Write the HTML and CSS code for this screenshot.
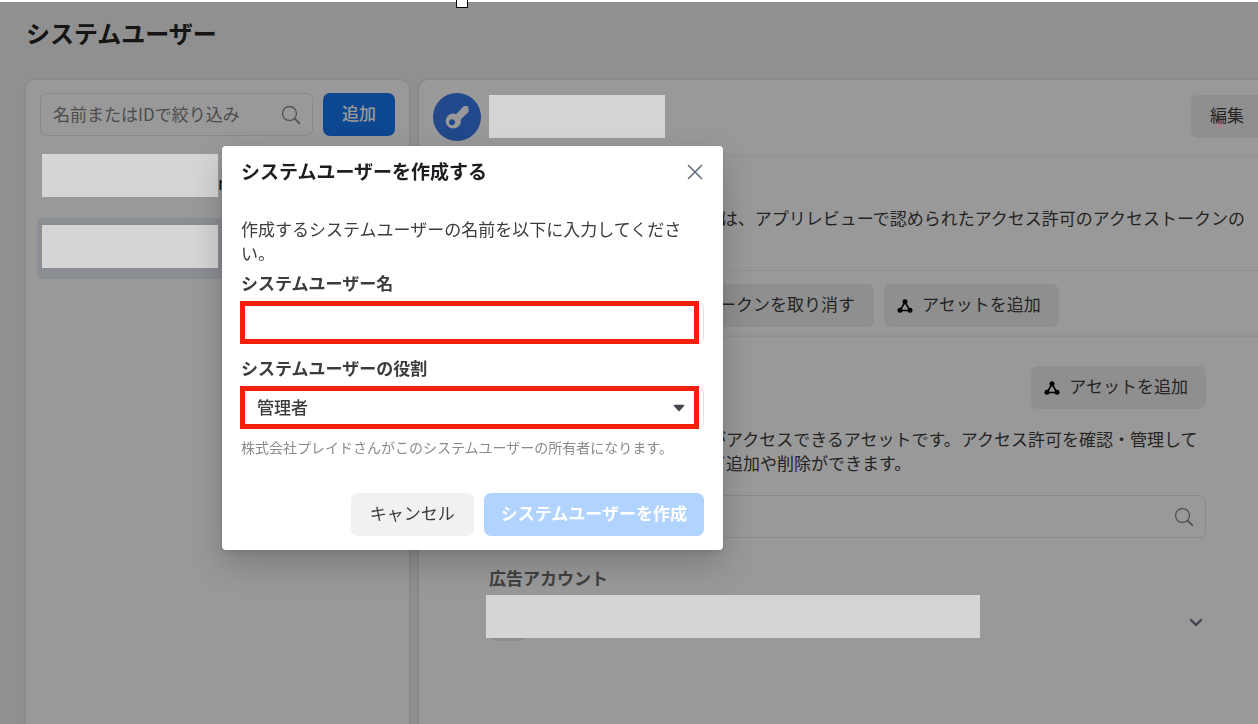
FILE: index.html
```html
<!DOCTYPE html>
<html lang="ja">
<head>
    <meta charset="UTF-8">
    <meta name="viewport" content="width=device-width, initial-scale=1.0">
    <title>システムユーザー</title>
    <link rel="stylesheet" href="styles.css">
</head>
<body>
    <svg class="sprite" aria-hidden="true">
        <symbol id="search" viewBox="0 0 20 20">
            <circle cx="8.5" cy="8.5" r="7" fill="none" stroke="currentColor" stroke-width="1.4"/>
            <path d="M13.8 13.8L18.4 18.4" stroke="currentColor" stroke-width="2" stroke-linecap="round"/>
        </symbol>
        <symbol id="assets" viewBox="0 0 16 16">
            <path d="M8 4L3 12.5H13Z" fill="none" stroke="currentColor" stroke-width="1.6"/>
            <circle cx="8" cy="3.8" r="2.5" fill="currentColor"/>
            <circle cx="3" cy="12.2" r="2.5" fill="currentColor"/>
            <circle cx="13" cy="12.2" r="2.5" fill="currentColor"/>
        </symbol>
    </svg>

    <!-- Page -->
    <div class="page">
        <h1>システムユーザー</h1>
        <div class="columns">
            <!-- User list -->
            <section class="panel users">
                <div class="user-tools">
                    <div class="search-box">
                        <input type="text" aria-label="名前またはIDで絞り込み" placeholder="名前またはIDで絞り込み">
                        <svg class="icon-search"><use href="#search"/></svg>
                    </div>
                    <button class="btn primary">追加</button>
                </div>
                <ul class="user-list">
                    <li><span class="mask"></span><span class="user-name">n</span></li>
                    <li class="selected"><span class="mask"></span></li>
                </ul>
            </section>

            <!-- User detail -->
            <div class="detail">
                <section class="panel summary">
                    <div class="summary-head">
                        <svg class="avatar" viewBox="0 0 48 48">
                            <circle cx="24" cy="24" r="24" fill="#387be8"/>
                            <path d="M21 26L31.5 14.8H33.8V18.2L23 28.5Z" fill="#fff" stroke="#fff" stroke-width="3.4" stroke-linejoin="round"/>
                            <circle cx="20.3" cy="28" r="7.6" fill="#fff"/>
                            <circle cx="19" cy="29.2" r="3" fill="#387be8"/>
                        </svg>
                        <span class="mask"></span>
                        <button class="btn edit">編集</button>
                    </div>
                    <p class="summary-text">のは、アプリレビューで認められたアクセス許可のアクセストークンの</p>
                    <div class="summary-actions">
                        <button class="btn">トークンを取り消す</button>
                        <button class="btn with-icon"><svg class="icon-assets"><use href="#assets"/></svg>アセットを追加</button>
                    </div>
                </section>

                <section class="panel assets">
                    <button class="btn with-icon"><svg class="icon-assets"><use href="#assets"/></svg>アセットを追加</button>
                    <p>がアクセスできるアセットです。アクセス許可を確認・管理して<br>て追加や削除ができます。</p>
                    <div class="search-box">
                        <input type="text" aria-label="アセットを検索">
                        <svg class="icon-search"><use href="#search"/></svg>
                    </div>
                    <h3>広告アカウント</h3>
                    <div class="asset-row">
                        <span class="thumb"></span>
                        <span class="mask"></span>
                        <svg class="chevron" viewBox="0 0 14 9"><path d="M2 2L7 7L12 2" fill="none" stroke="currentColor" stroke-width="2.4" stroke-linecap="round" stroke-linejoin="round"/></svg>
                    </div>
                </section>
            </div>
        </div>
    </div>

    <div class="backdrop"></div>
    <div class="top-edge"><span class="handle"></span></div>

    <!-- Create dialog -->
    <form class="modal" role="dialog" aria-labelledby="modalTitle">
        <div class="modal-head">
            <h2 id="modalTitle">システムユーザーを作成する</h2>
            <button type="button" class="close" aria-label="閉じる">
                <svg viewBox="0 0 16 16"><path d="M1.5 1.5L14.5 14.5M14.5 1.5L1.5 14.5" stroke="currentColor" stroke-width="1.7" stroke-linecap="round"/></svg>
            </button>
        </div>
        <p class="lead">作成するシステムユーザーの名前を以下に入力してください。</p>

        <label for="userName">システムユーザー名</label>
        <div class="field">
            <input type="text" id="userName">
            <span class="highlight"></span>
        </div>

        <label for="role">システムユーザーの役割</label>
        <div class="field">
            <select id="role">
                <option>管理者</option>
            </select>
            <svg class="caret" viewBox="0 0 12 8"><path d="M1.5 1.5H10.5L6 6.5Z" fill="currentColor" stroke="currentColor" stroke-width="1.6" stroke-linejoin="round"/></svg>
            <span class="highlight"></span>
        </div>
        <p class="hint">株式会社プレイドさんがこのシステムユーザーの所有者になります。</p>

        <div class="modal-actions">
            <button type="button" class="btn">キャンセル</button>
            <button type="submit" class="btn primary" disabled>システムユーザーを作成</button>
        </div>
    </form>
</body>
</html>
```

FILE: styles.css
```css
* {
    box-sizing: border-box;
}
body {
    margin: 0;
    height: 100vh;
    overflow: hidden;
    background: #f0f0f0;
    color: #3c3c3c;
    font-family: "Noto Sans CJK JP", sans-serif;
    font-size: 17px;
    line-height: 24px;
}
h1, h2, h3, p, ul {
    margin: 0;
    padding: 0;
}
input, select, button {
    font: inherit;
    color: inherit;
}
.sprite {
    display: none;
}

/* Shared controls */
.btn {
    height: 43px;
    padding: 0 19px 3px;
    border: none;
    border-radius: 7px;
    background: #f1f1f1;
    white-space: nowrap;
}
.page .btn {
    background: #efefef;
}
.btn.primary,
.page .btn.primary {
    background: #1877f2;
    color: #fff;
    font-weight: 500;
}
.btn.primary:disabled {
    background: #b0d4ff;
    font-weight: 700;
}
.btn.with-icon {
    display: flex;
    align-items: center;
    gap: 9px;
    padding: 0 18px 3px 13px;
}
.icon-assets {
    width: 16px;
    height: 16px;
    margin-top: 3px;
    color: #000;
}
.search-box {
    position: relative;
    flex: 1;
}
.search-box input {
    display: block;
    width: 100%;
    height: 43px;
    padding: 0 40px 3px 12px;
    border: 1px solid #e4e4e4;
    border-radius: 7px;
    background: #fff;
}
.search-box input::placeholder {
    color: #808080;
    opacity: 1;
}
.icon-search {
    position: absolute;
    top: 12px;
    right: 12px;
    width: 20px;
    height: 20px;
    color: #888e99;
}
.mask {
    position: relative;
    z-index: 2;
    width: 176px;
    height: 43px;
    background: #d5d5d5;
}

/* Page */
.page {
    display: flex;
    flex-direction: column;
    height: 100vh;
    padding: 15px 0 0 26px;
}
h1 {
    height: 65px;
    color: #242424;
    font-size: 24px;
    line-height: 36px;
}
.columns {
    display: grid;
    grid-template-columns: 383px 1fr;
    gap: 10px;
    flex: 1;
    margin-bottom: -16px;
}
.panel {
    background: #fff;
    border-radius: 9px;
    box-shadow: 0 0 3px rgba(0, 0, 0, 0.15);
}
.user-tools {
    display: flex;
    gap: 10px;
    padding: 13px 14px 0;
}
.user-list {
    display: flex;
    flex-direction: column;
    gap: 10px;
    padding: 11px;
    list-style: none;
}
.user-list li {
    display: flex;
    align-items: flex-start;
    height: 61px;
    padding: 7px 5px;
    border-radius: 6px;
}
.user-list li.selected {
    background: #e6ebf3;
}
.user-name {
    padding-top: 17px;
    color: #1c1c1c;
}

.detail {
    display: flex;
    flex-direction: column;
    margin-right: -22px;
}
.summary {
    border-radius: 9px 9px 0 0;
}
.summary-head {
    display: flex;
    align-items: center;
    height: 76px;
    padding: 0 17px 2px 14px;
    border-bottom: 1px solid #f0f0f0;
}
.avatar {
    width: 48px;
    height: 48px;
    margin-right: 8px;
}
.edit {
    margin-left: auto;
}
.summary-text {
    height: 115px;
    padding: 50px 35px 0 0;
    border-bottom: 1px solid #f0f0f0;
    text-align: right;
}
.summary-actions {
    display: flex;
    gap: 10px;
    padding: 13px 14px 10px 264px;
}
.assets {
    display: flex;
    flex: 1;
    flex-direction: column;
    padding: 29px 74px 0 48px;
    border-radius: 0;
}
.assets .btn {
    align-self: flex-end;
}
.assets p {
    margin: 18px 0 20px;
    padding-left: 242px;
    white-space: nowrap;
}
.assets .search-box {
    flex: none;
}
h3 {
    margin: 28px 22px 5px;
    color: #6c6c6c;
    font-size: 17px;
}
.asset-row {
    position: relative;
    display: flex;
    align-items: center;
    justify-content: space-between;
    padding: 0 3px 0 19px;
}
.asset-row .mask {
    width: 494px;
}
.thumb {
    position: absolute;
    bottom: -3px;
    left: 22px;
    width: 37px;
    height: 37px;
    border-radius: 6px;
    background: #efefef;
}
.chevron {
    width: 14px;
    height: 9px;
    margin-top: 12px;
    color: #6b707a;
}

.backdrop {
    position: fixed;
    inset: 0;
    z-index: 1;
    background: rgba(0, 0, 0, 0.4);
}
.top-edge {
    position: fixed;
    inset: 0 0 auto;
    z-index: 2;
    height: 2px;
    background: #fff;
}
.handle {
    position: absolute;
    top: -4px;
    left: 456px;
    width: 12px;
    height: 12px;
    border: 1px solid #000;
    background: #fff;
}

/* Dialog */
.modal {
    position: fixed;
    top: 146px;
    left: 222px;
    z-index: 3;
    width: 501px;
    padding: 11px 19px 14px;
    border-radius: 4px;
    background: #fff;
    box-shadow: 0 14px 34px rgba(0, 0, 0, 0.2), 0 2px 5px rgba(0, 0, 0, 0.1);
}
.modal-head {
    display: flex;
    align-items: center;
    justify-content: space-between;
}
h2 {
    color: #1c1e21;
    font-size: 19px;
    line-height: 28px;
}
.close {
    display: flex;
    margin-top: 2px;
    padding: 2px 1px;
    border: none;
    background: none;
    color: #667080;
}
.close svg {
    width: 16px;
    height: 16px;
}
.lead {
    margin: 32px 0 5px;
    padding-right: 16px;
}
label {
    display: block;
    padding-top: 1px;
    font-weight: 700;
}
.field {
    position: relative;
    margin: 6px 0 11px;
}
.field input,
.field select {
    display: block;
    width: 100%;
    height: 43px;
    padding: 0 15px 2px;
    border: 1px solid #e4e4e4;
    border-radius: 7px;
    background: #fff;
    font-weight: 500;
    appearance: none;
}
.caret {
    position: absolute;
    top: 18px;
    right: 19px;
    width: 12px;
    height: 8px;
    color: #444950;
}
.highlight {
    position: absolute;
    inset: 0 5px 0 -1px;
    border: 5px solid #f0200c;
    pointer-events: none;
}
.hint {
    margin-top: -3px;
    color: #8a8a8a;
    font-size: 14px;
    line-height: 20px;
}
.modal-actions {
    display: flex;
    justify-content: flex-end;
    gap: 10px;
    margin-top: 36px;
}
.modal-actions .btn.primary {
    padding: 0 17px 3px;
}
```
